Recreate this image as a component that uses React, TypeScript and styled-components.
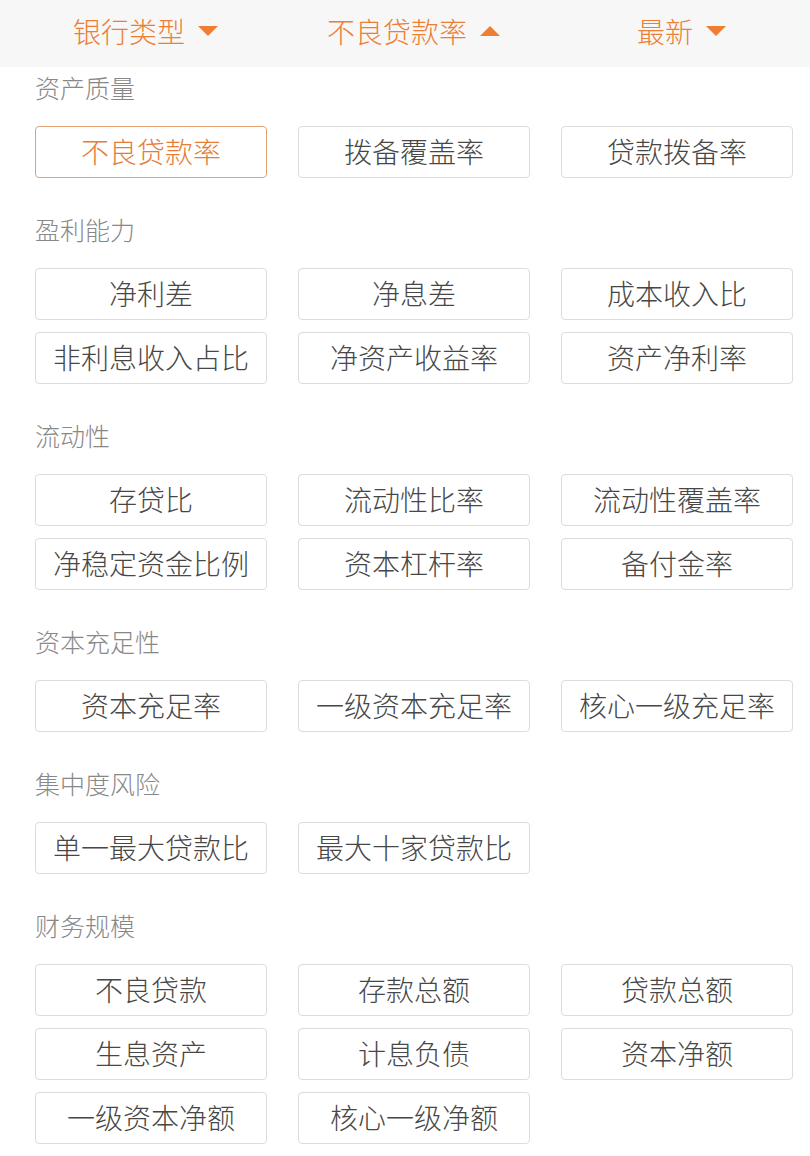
import React, { useState } from "react";
import styled, { createGlobalStyle } from "styled-components";

const GlobalStyle = createGlobalStyle`
  html, body {
    margin: 0;
    padding: 0;
    background: #fff;
    font-family: "Noto Sans CJK SC", "Noto Sans", sans-serif;
  }
`;

const Page = styled.div`
  width: 810px;
  min-height: 1156px;
  background: #fff;
  overflow: hidden;
`;

const FilterBar = styled.div`
  height: 67px;
  box-sizing: border-box;
  padding: 0 0 5px 12px;
  background: #f7f7f7;
  display: grid;
  grid-template-columns: repeat(3, 268px);
`;

const FilterItem = styled.div`
  display: flex;
  align-items: center;
  justify-content: center;
  gap: 12px;
  color: #ec7f35;
  font-size: 28px;
  font-weight: 300;
  cursor: pointer;
`;

const Caret = styled.svg`
  width: 22px;
  height: 12px;
  flex: none;
`;

const Body = styled.div`
  padding: 2px 17px 0 35px;
`;

const Section = styled.section`
  margin-bottom: 33px;
`;

const SectionTitle = styled.div`
  height: 36px;
  line-height: 36px;
  font-size: 25px;
  font-weight: 300;
  color: #888;
  margin-bottom: 21px;
`;

const Grid = styled.div`
  display: grid;
  grid-template-columns: repeat(3, 232px);
  column-gap: 31px;
  row-gap: 12px;
`;

const Tag = styled.button<{ $active: boolean }>`
  height: 52px;
  box-sizing: border-box;
  border: 1px solid ${({ $active }) => ($active ? "#e3a273" : "#dcdcdc")};
  border-radius: 4px;
  background: #fff;
  color: ${({ $active }) => ($active ? "#e57d38" : "#474747")};
  font-family: inherit;
  font-size: 28px;
  font-weight: 300;
  padding: 0 0 3px;
  cursor: pointer;
`;

const groups: { title: string; items: string[] }[] = [
  { title: "资产质量", items: ["不良贷款率", "拨备覆盖率", "贷款拨备率"] },
  {
    title: "盈利能力",
    items: ["净利差", "净息差", "成本收入比", "非利息收入占比", "净资产收益率", "资产净利率"],
  },
  {
    title: "流动性",
    items: ["存贷比", "流动性比率", "流动性覆盖率", "净稳定资金比例", "资本杠杆率", "备付金率"],
  },
  { title: "资本充足性", items: ["资本充足率", "一级资本充足率", "核心一级充足率"] },
  { title: "集中度风险", items: ["单一最大贷款比", "最大十家贷款比"] },
  {
    title: "财务规模",
    items: ["不良贷款", "存款总额", "贷款总额", "生息资产", "计息负债", "资本净额", "一级资本净额", "核心一级净额"],
  },
];

const Arrow = ({ up }: { up?: boolean }) => (
  <Caret viewBox="0 0 22 12">
    {up ? (
      <path d="M11 1 L21 11 L1 11 Z" fill="#ef7d32" />
    ) : (
      <path d="M1 1 L21 1 L11 11 Z" fill="#ef7d32" />
    )}
  </Caret>
);

export default function App() {
  const [selected, setSelected] = useState("不良贷款率");

  return (
    <Page>
      <GlobalStyle />
      <FilterBar>
        <FilterItem>
          银行类型 <Arrow />
        </FilterItem>
        <FilterItem>
          {selected} <Arrow up />
        </FilterItem>
        <FilterItem>
          最新 <Arrow />
        </FilterItem>
      </FilterBar>
      <Body>
        {groups.map((g) => (
          <Section key={g.title}>
            <SectionTitle>{g.title}</SectionTitle>
            <Grid>
              {g.items.map((item) => (
                <Tag key={item} $active={item === selected} onClick={() => setSelected(item)}>
                  {item}
                </Tag>
              ))}
            </Grid>
          </Section>
        ))}
      </Body>
    </Page>
  );
}
